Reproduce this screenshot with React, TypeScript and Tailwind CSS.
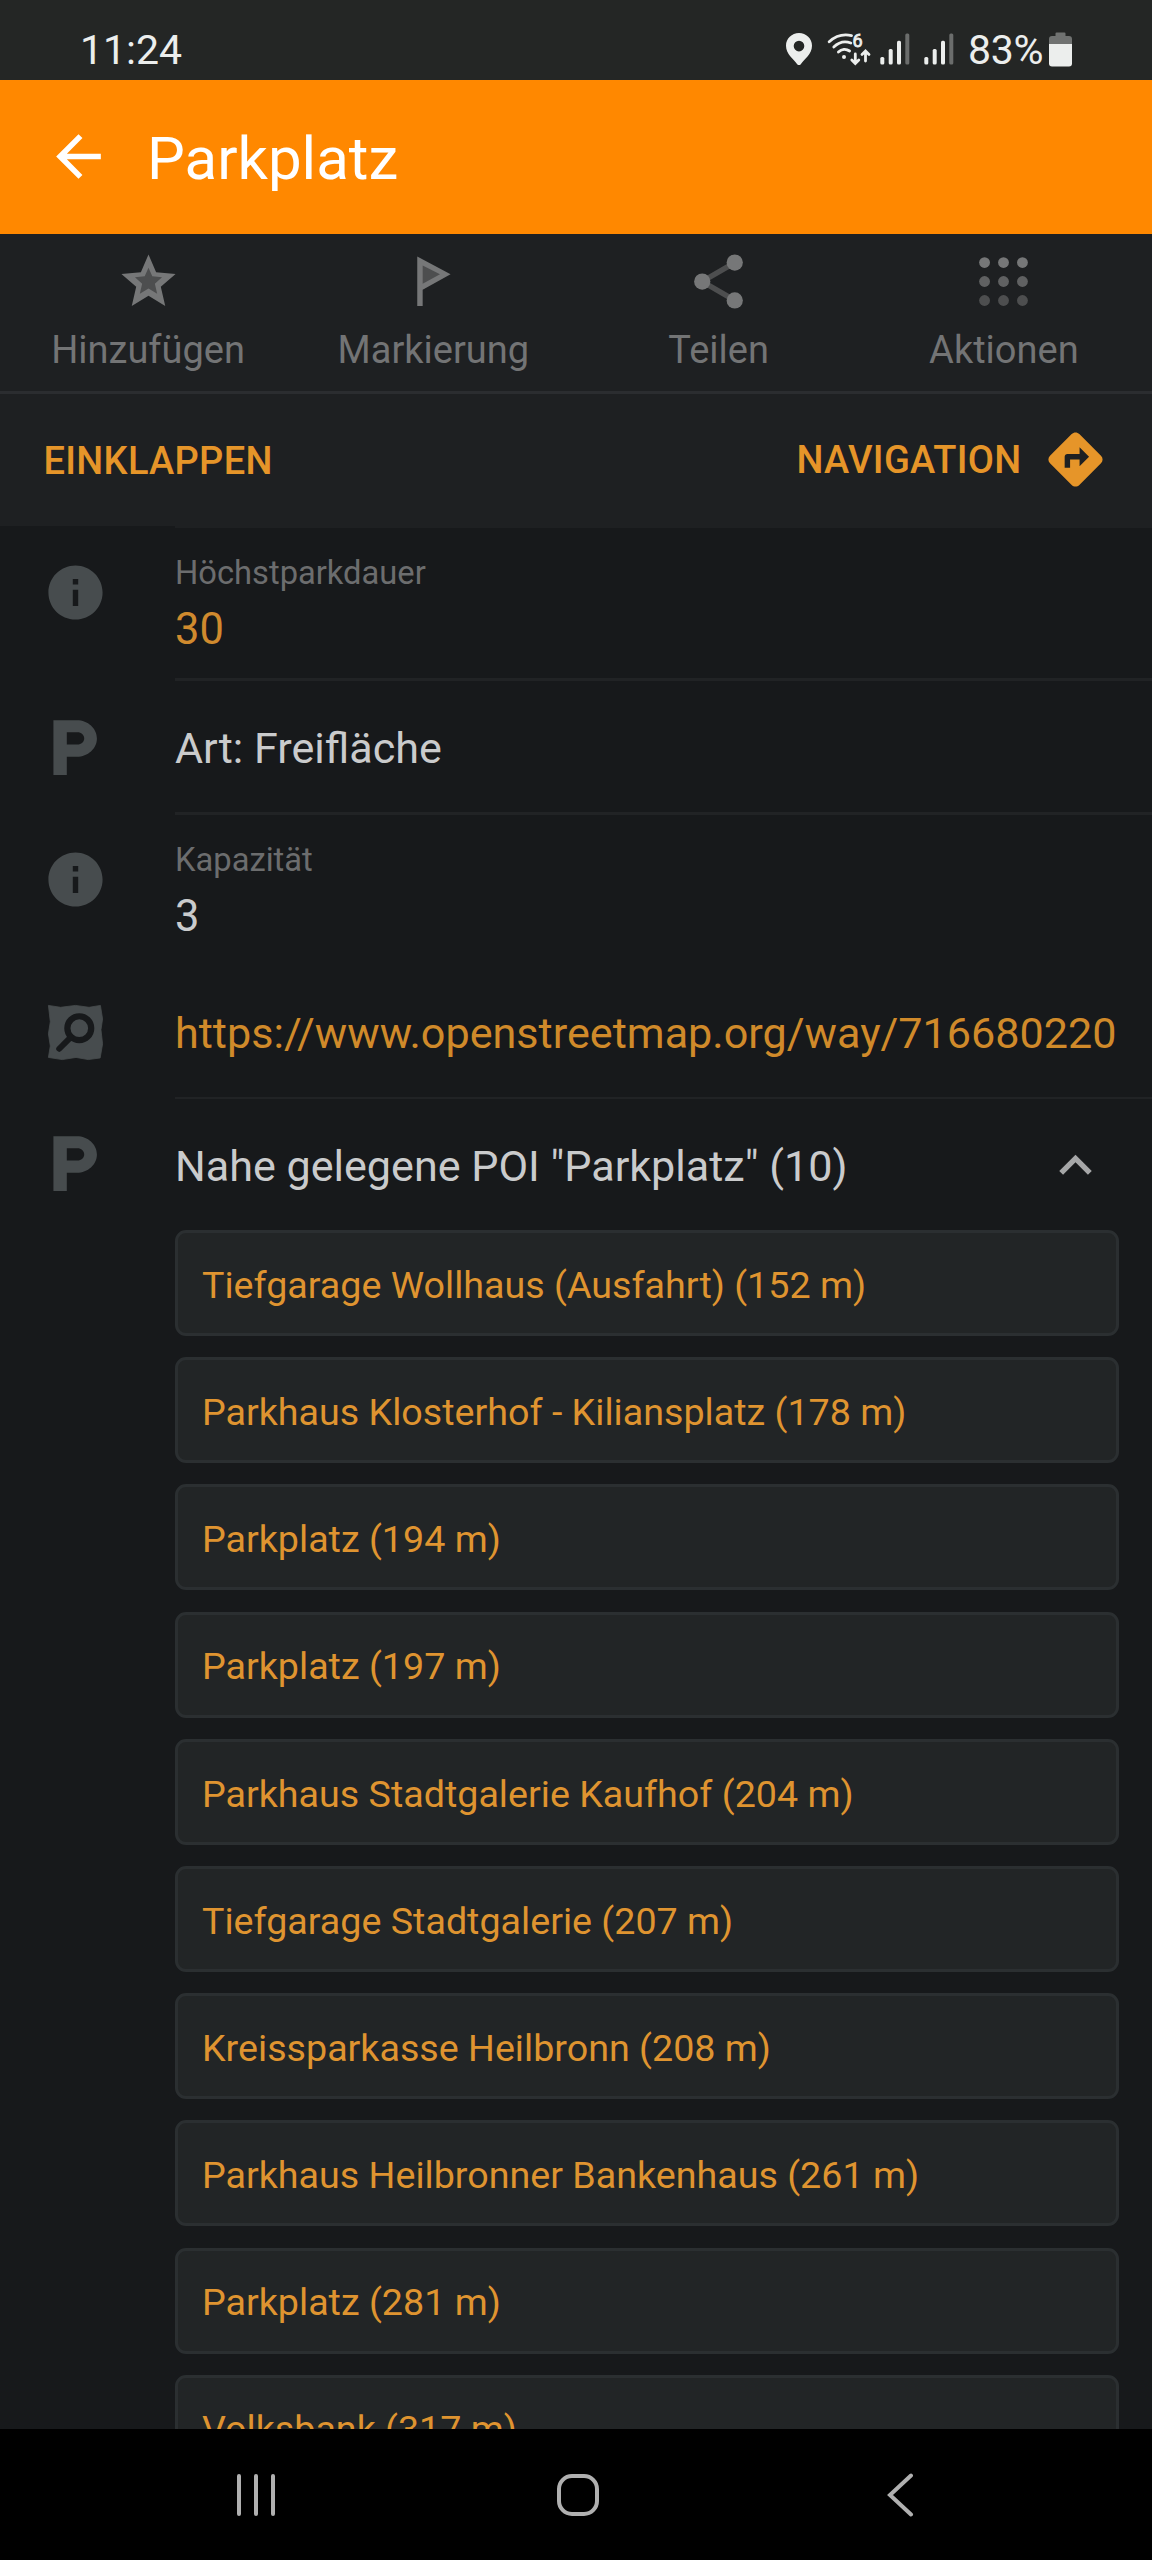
import type { ReactNode } from "react";
import clsx from "clsx";
import { MdArrowBack, MdDirections, MdExpandLess, MdInfo, MdLocalParking } from "react-icons/md";

const nearby = [
  { name: "Tiefgarage Wollhaus (Ausfahrt)", distance: "152 m" },
  { name: "Parkhaus Klosterhof - Kiliansplatz", distance: "178 m" },
  { name: "Parkplatz", distance: "194 m" },
  { name: "Parkplatz", distance: "197 m" },
  { name: "Parkhaus Stadtgalerie Kaufhof", distance: "204 m" },
  { name: "Tiefgarage Stadtgalerie", distance: "207 m" },
  { name: "Kreissparkasse Heilbronn", distance: "208 m" },
  { name: "Parkhaus Heilbronner Bankenhaus", distance: "261 m" },
  { name: "Parkplatz", distance: "281 m" },
  { name: "Volksbank", distance: "317 m" }
];

function SignalIcon({ className }: { className?: string }) {
  return (
    <svg className={clsx("h-[34px] w-[30px]", className)} viewBox="0 0 30 34" fill="#eceeed">
      <rect x="0.3" y="25" width="4" height="7.5" rx="1.5" />
      <rect x="8.7" y="17" width="4" height="15.5" rx="1.5" />
      <rect x="17" y="8.8" width="4" height="23.7" rx="1.5" />
      <rect x="25.3" y="1.5" width="4" height="31" rx="1.5" fill="#6b6d6c" />
    </svg>
  );
}

function StatusBar() {
  return (
    <header className="flex h-20 shrink-0 items-start justify-between bg-[#242625] px-20 pt-8 text-[41px] leading-9 text-[#eceeed]">
      <span>11:24</span>
      <div className="flex items-start">
        <svg className="h-[34px] w-[26px]" viewBox="0 0 26 34" fill="#eceeed">
          <path
            fillRule="evenodd"
            d="M13 1C5.8 1 0 6.6 0 13.7c0 8.4 7.6 13.3 11.2 18.5.9 1.2 2.7 1.2 3.6 0C18.4 27 26 22.1 26 13.7 26 6.6 20.2 1 13 1zm0 7.8a5.3 5.3 0 1 1 0 10.6 5.3 5.3 0 0 1 0-10.6z"
          />
        </svg>
        <svg className="ml-[15px] h-[34px] w-[44px]" viewBox="0 0 44 34" fill="none" stroke="#eceeed" strokeWidth="2.8" strokeLinecap="round">
          <path d="M2.2 9.8C8.5 4 16.5 1.8 24.5 3.6" />
          <path d="M6.8 15c4.8-4.7 11.2-6.2 17-4" />
          <path d="M11.4 20c3.2-3 7.6-3.5 11.2-1" />
          <circle cx="17" cy="25" r="2" fill="#eceeed" stroke="none" />
          <text x="25.5" y="15" fill="#eceeed" stroke="#eceeed" strokeWidth="0.8" fontSize="18">
            6
          </text>
          <path d="M28.3 22v9M24.8 28l3.5 3.5 3.5-3.5M38.5 29v-9.5M35 22.5l3.5-3.5 3.5 3.5" />
        </svg>
        <SignalIcon className="ml-[9px]" />
        <SignalIcon className="ml-[14px]" />
        <span className="ml-[14px] w-[81px] tracking-[-0.3px]">83%</span>
        <svg className="h-[36px] w-[23px]" viewBox="0 0 23 36">
          <path d="M6.5 1.5a1 1 0 0 1 1-1h8a1 1 0 0 1 1 1V4H20a3 3 0 0 1 3 3v6H0V7a3 3 0 0 1 3-3h3.500z" fill="#707271" />
          <path d="M0 12h23v19.500a3 3 0 0 1-3 3H3a3 3 0 0 1-3-3z" fill="#eceeed" />
        </svg>
      </div>
    </header>
  );
}

function StarIcon() {
  return (
    <svg className="size-[65px]" viewBox="0 0 24 24">
      <path d="M12 17.27 18.18 21l-1.64-7.03L22 9.24l-7.19-.61L12 2 9.19 8.63 2 9.24l5.46 4.73L5.82 21z" fill="#767778" />
      <path d="M12 14.6 8.8 16.5l.85-3.7L7 10.4l3.6-.3L12 6.9l1.4 3.2 3.6.3-2.65 2.4.85 3.7z" fill="#4d4e4f" />
    </svg>
  );
}

function FlagIcon() {
  return (
    <svg className="size-[65px]" viewBox="0 0 24 24">
      <path d="M6 2.8 18.3 9.3 8 15v6H6z" fill="#767778" />
      <path d="M8 6.1l6.4 3.2L8 12.8z" fill="#4d4e4f" />
    </svg>
  );
}

function ShareIcon() {
  return (
    <svg className="size-[65px]" viewBox="0 0 24 24" fill="#767778">
      <path d="M18 5 6 12l12 7" fill="none" stroke="#4d4e4f" strokeWidth="2" />
      <circle cx="18" cy="5" r="3" />
      <circle cx="6" cy="12" r="3" />
      <circle cx="18" cy="19" r="3" />
    </svg>
  );
}

function ActionsIcon() {
  const rows = [
    { y: 5, fill: "#767778" },
    { y: 12, fill: "#606162" },
    { y: 19, fill: "#4d4e4f" }
  ];

  return (
    <svg className="size-[65px]" viewBox="0 0 24 24">
      {rows.map((row) => [5, 12, 19].map((x) => <circle key={`${x}-${row.y}`} cx={x} cy={row.y} r="2" fill={row.fill} />))}
    </svg>
  );
}

function OsmIcon() {
  return (
    <svg className="size-[65px]" viewBox="0 0 24 24">
      <path
        d="M2 2 6.5 2.7 12 2l5 .7L21.200 2l.8 5-.6 4 .6 5.200-.9 5.200-4.400.600-4.500-.800-5.100.800L2 21.200 2.700 17 2 12.500 2.700 8z"
        fill="#474c4e"
        stroke="#474c4e"
        strokeWidth="0.3"
        strokeLinejoin="round"
      />
      <circle cx="13.4" cy="10.4" r="4.4" fill="none" stroke="#17191b" strokeWidth="2.3" />
      <path d="m10.2 13.8-4.2 4.200" stroke="#17191b" strokeWidth="2.2" strokeLinecap="round" />
    </svg>
  );
}

function ParkingIcon() {
  return <MdLocalParking className="mr-[4px] size-[73px] shrink-0 scale-x-110 text-[#474c4e]" />;
}

function Tab({ icon, label }: { icon: ReactNode; label: string }) {
  return (
    <button className="flex flex-1 flex-col items-center pt-[15px] text-[38px] leading-[44px] text-[#737475]">
      {icon}
      <span className="mt-[14px]">{label}</span>
    </button>
  );
}

function Row({ icon, className, children }: { icon: ReactNode; className: string; children: ReactNode }) {
  return (
    <div className={clsx("flex shrink-0", className)}>
      <div className="flex w-[175px] shrink-0 items-center pb-[2px] pl-[43px]">
        <div className="flex w-[65px] justify-center">{icon}</div>
      </div>
      {children}
    </div>
  );
}

function Detail({ label, value, className }: { label: string; value: string; className?: string }) {
  return (
    <div className={clsx("flex-1 pt-[26px]", className)}>
      <div className="text-[32.7px] leading-[38px] text-[#6c6d6e]">{label}</div>
      <div className="mt-[12px] text-[43.5px] leading-[52px]">{value}</div>
    </div>
  );
}

export default function App() {
  const info = <MdInfo className="mb-[22px] size-[65px] text-[#474c4e]" />;

  return (
    <div className="flex h-[2560px] w-[1152px] flex-col overflow-hidden bg-[#17191b] font-['Roboto',sans-serif] text-[#cacbcc]">
      <StatusBar />

      <div className="flex h-[153.5px] shrink-0 items-center bg-[#ff8800] pl-[45px] text-white">
        <MdArrowBack className="size-[67px]" />
        <h1 className="ml-[35px] pt-[5px] text-[60px] leading-[72px]">Parkplatz</h1>
      </div>

      <section className="flex h-[292.5px] shrink-0 flex-col bg-[#1e2022]">
        <div className="flex h-[160.5px] border-b-[3px] border-[#2b2d30] px-[5.5px]">
          <Tab icon={<StarIcon />} label="Hinzufügen" />
          <Tab icon={<FlagIcon />} label="Markierung" />
          <Tab icon={<ShareIcon />} label="Teilen" />
          <Tab icon={<ActionsIcon />} label="Aktionen" />
        </div>
        <div className="flex flex-1 items-center justify-between pl-[43.5px] pr-[44.5px] text-[38px] font-medium tracking-[0.3px] text-[#e69529]">
          <button className="pt-[2px]">EINKLAPPEN</button>
          <button className="mb-[2px] flex items-center gap-[21px]">
            <span className="pt-[3px]">NAVIGATION</span>
            <MdDirections className="size-[65px]" />
          </button>
        </div>
      </section>

      <main className="flex min-h-0 flex-1 flex-col overflow-hidden">
        <div className="ml-[175px] h-[2px] shrink-0 bg-[#1e2022]" />
        <Row icon={info} className="h-[153px]">
          <Detail label="Höchstparkdauer" value="30" className="border-b-[3px] border-[#212325] [&>div:last-child]:text-[#d08a2e]" />
        </Row>
        <Row icon={<ParkingIcon />} className="h-[134px]">
          <div className="flex flex-1 items-center border-b-[3px] border-[#212325] pt-[5px] text-[43.1px]">Art: Freifläche</div>
        </Row>
        <Row icon={info} className="h-[152px]">
          <Detail label="Kapazität" value="3" />
        </Row>
        <Row icon={<OsmIcon />} className="h-[132px]">
          <div className="flex flex-1 items-center border-b-2 border-[#212325] pt-[4px] text-[43.15px] text-[#d08a2a]">
            https://www.openstreetmap.org/way/716680220
          </div>
        </Row>
        <Row icon={<ParkingIcon />} className="h-[131px]">
          <div className="flex flex-1 items-center justify-between pr-[44px] text-[43.1px]">
            <span className="pt-[6px]">Nahe gelegene POI "Parkplatz" (10)</span>
            <MdExpandLess className="mt-[2px] size-[65px] text-[#a6a7a8]" />
          </div>
        </Row>
        <ul className="ml-[175px] mr-[33px] flex shrink-0 flex-col gap-[21.2px]">
          {nearby.map((poi) => (
            <li
              key={`${poi.name}-${poi.distance}`}
              className="flex h-[106px] items-center rounded-[11px] border-[3px] border-[#2b2f31] bg-[#222526] pl-[24px] pt-[4px] text-[37.65px] text-[#df9430]"
            >
              {poi.name} ({poi.distance})
            </li>
          ))}
        </ul>
      </main>

      <nav className="flex h-[131px] shrink-0 items-center bg-black pl-[236px]">
        <svg className="h-[44px] w-[40px]" viewBox="0 0 40 44" stroke="#b0b0b0" strokeWidth="4" strokeLinecap="round">
          <path d="M3 3v38M20 3v38M37 3v38" />
        </svg>
        <svg className="ml-[280px] h-[44px] w-[44px]" viewBox="0 0 44 44" fill="none" stroke="#b0b0b0" strokeWidth="4">
          <rect x="3" y="3" width="38" height="38" rx="13" />
        </svg>
        <svg className="ml-[287px] h-[44px] w-[27px]" viewBox="0 0 27 44" fill="none" stroke="#b0b0b0" strokeWidth="4" strokeLinecap="round">
          <path d="M24 2.5 3 22l21 19.5" />
        </svg>
      </nav>
    </div>
  );
}
